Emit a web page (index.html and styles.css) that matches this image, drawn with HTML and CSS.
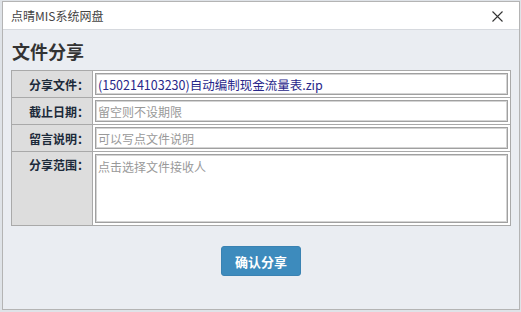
FILE: index.html
```html
<!DOCTYPE html>
<html lang="zh-CN">
<head>
    <meta charset="UTF-8">
    <title>点晴MIS系统网盘</title>
    <link rel="stylesheet" href="styles.css">
</head>
<body>
    <div class="dialog">
        <div class="title-bar">
            <span class="title">点晴MIS系统网盘</span>
            <span class="close">
                <svg width="11" height="11" viewBox="0 0 11 11">
                    <path d="M0.5 0.5 L10.5 10.5 M10.5 0.5 L0.5 10.5" stroke="#333" stroke-width="1.1" fill="none"/>
                </svg>
            </span>
        </div>
        <div class="content">
            <h1>文件分享</h1>
            <table class="share-table">
                <tr>
                    <th>分享文件：</th>
                    <td><input type="text" class="file-name" value="(150214103230)自动编制现金流量表.zip"></td>
                </tr>
                <tr>
                    <th>截止日期：</th>
                    <td><input type="text" placeholder="留空则不设期限"></td>
                </tr>
                <tr>
                    <th>留言说明：</th>
                    <td><input type="text" placeholder="可以写点文件说明"></td>
                </tr>
                <tr>
                    <th class="top">分享范围：</th>
                    <td><textarea placeholder="点击选择文件接收人"></textarea></td>
                </tr>
            </table>
            <div class="actions">
                <button type="button">确认分享</button>
            </div>
        </div>
    </div>
</body>
</html>
```

FILE: styles.css
```css
/* Dialog window */
body {
    margin: 0;
    background-color: #dfe3e8;
    font-family: "Noto Sans CJK SC", "Noto Sans", sans-serif;
}

.dialog {
    margin: 1px 0 0 2px;
    width: 516px;
    height: 307px;
    border: 1px solid #b4b4b4;
    background: #eaedf2;
    display: flex;
    flex-direction: column;
}

.title-bar {
    height: 27px;
    background: white;
    border-bottom: 1px solid #d6d9de;
    display: flex;
    align-items: center;
    justify-content: space-between;
    padding: 0 16px 0 8px;
}

.title {
    font-size: 12px;
    color: #444;
}

.close {
    display: flex;
    margin-top: 2px;
}

.content {
    padding: 0 8px;
}

h1 {
    margin: 9px 0 0 1px;
    height: 31px;
    font-size: 18px;
    font-weight: bold;
    color: #333;
    line-height: 24px;
}

.share-table {
    width: 500px;
    border-collapse: collapse;
    background: white;
}

.share-table th,
.share-table td {
    border: 1px solid #a9a9a9;
    padding: 2px;
}

.share-table th {
    width: 75px;
    background: #dddddd;
    text-align: right;
    font-size: 12px;
    font-weight: bold;
    color: #1c2a3a;
    padding-right: 3px;
    white-space: nowrap;
}

.share-table th.top {
    vertical-align: top;
    padding-top: 4px;
}

input[type="text"], textarea {
    display: block;
    box-sizing: border-box;
    width: 100%;
    margin: 0;
    border: 1px solid #a0a0a0;
    box-shadow: inset 0 0 0 1px #d4d4d4;
    padding: 0 2px;
    font-family: "Noto Sans CJK SC", "Noto Sans", sans-serif;
    font-size: 12px;
    color: #333;
    outline: none;
}

input[type="text"] {
    height: 22px;
}

textarea {
    height: 69px;
    padding-top: 3px;
    resize: none;
}

input::placeholder, textarea::placeholder {
    color: #999;
}

.file-name {
    color: #28278a !important;
    font-size: 12.5px !important;
}

.actions {
    display: flex;
    justify-content: center;
    margin-top: 20px;
}

button {
    width: 80px;
    height: 30px;
    background-color: #3d8bbd;
    color: white;
    border: 1px solid #3a82b2;
    border-radius: 3px;
    font-family: "Noto Sans CJK SC", "Noto Sans", sans-serif;
    font-size: 13px;
    font-weight: bold;
    cursor: pointer;
}

button:hover {
    background-color: #3479a6;
}
```
